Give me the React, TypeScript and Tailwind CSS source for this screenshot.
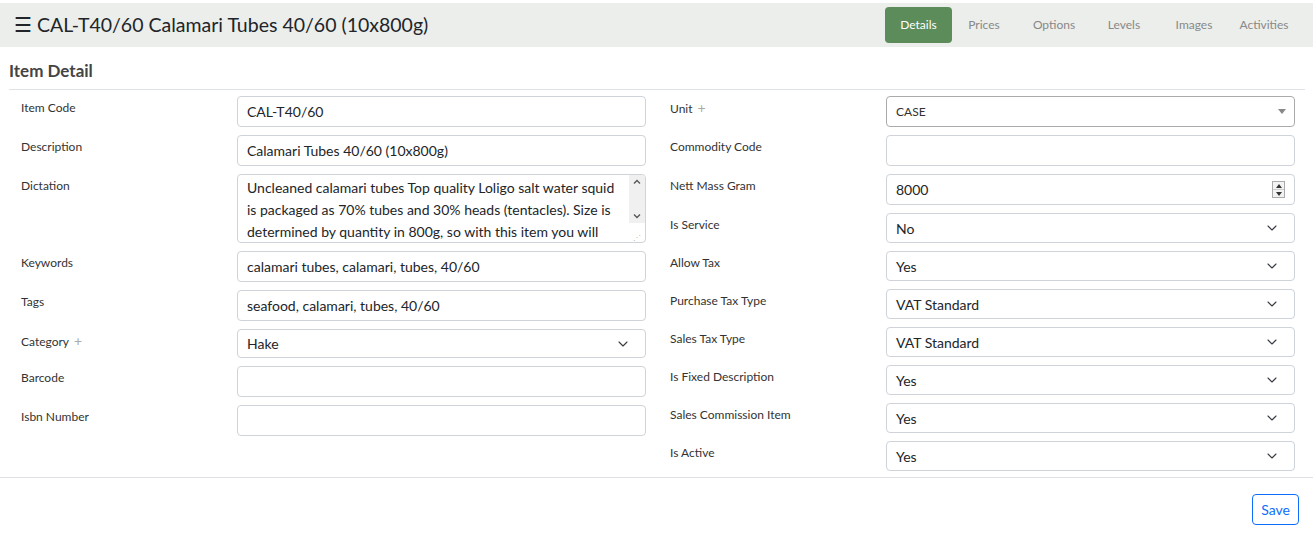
import { ChevronDown } from 'lucide-react';

const tabs = ['Details', 'Prices', 'Options', 'Levels', 'Images', 'Activities'];

function Label({ text, plus }: { text: string; plus?: boolean }) {
  return (
    <div className="w-[216px] shrink-0 pt-[3px] text-[12px] leading-[18px] text-[#333]">
      {text}
      {plus && <span className="ml-[5px] text-[14px] text-[#aaa]">+</span>}
    </div>
  );
}

function TextBox({ value }: { value?: string }) {
  return (
    <div className="flex h-[31px] w-[409px] items-center rounded-[4px] border border-[#ced4da] px-[9px] text-[14px] text-[#212529]">
      {value}
    </div>
  );
}

function SelectBox({ value, h = 'h-[30px]' }: { value: string; h?: string }) {
  return (
    <div
      className={`flex ${h} w-[409px] items-center justify-between rounded-[4px] border border-[#ced4da] pl-[9px] pr-[14px] text-[14px] text-[#212529]`}
    >
      <span>{value}</span>
      <ChevronDown size={16} strokeWidth={1.6} className="text-[#343a40]" />
    </div>
  );
}

export default function App() {
  return (
    <div className="min-h-screen bg-white pt-[3px] font-['Lato','Liberation_Sans',sans-serif] text-[#212529]">
      {/* Header */}
      <div className="flex h-[44px] items-center justify-between bg-[#eceeeb] pl-[14px] pr-[14px]">
        <h1 className="text-[19.5px] text-[#212529]">☰ CAL-T40/60 Calamari Tubes 40/60 (10x800g)</h1>
        <div className="flex">
          {tabs.map((t, i) => (
            <div
              key={t}
              className={
                i === 0
                  ? 'mr-[-3px] flex h-[36px] w-[67px] items-center justify-center rounded-[4px] bg-[#5b8c5a] text-[12px] text-white'
                  : 'flex h-[36px] w-[70px] items-center justify-center text-[12px] text-[#888]'
              }
            >
              {t}
            </div>
          ))}
        </div>
      </div>

      {/* Item detail */}
      <div className="pl-[9px] pr-[6px]">
        <h2 className="mr-[2px] border-b border-[#dee2e6] pb-[8px] pt-[14px] text-[17px] font-bold leading-[20px] text-[#444]">
          Item Detail
        </h2>
        <div className="grid grid-cols-2 pt-[6px]">
          {/* Left column */}
          <div className="flex flex-col gap-[8px] px-[12px]">
            <div className="flex">
              <Label text="Item Code" />
              <TextBox value="CAL-T40/60" />
            </div>
            <div className="flex">
              <Label text="Description" />
              <TextBox value="Calamari Tubes 40/60 (10x800g)" />
            </div>
            <div className="flex">
              <Label text="Dictation" />
              <div className="flex h-[69px] w-[409px] overflow-hidden rounded-[4px] border border-[#ced4da] text-[14px] leading-[22px] text-[#212529]">
                <div className="flex-1 pl-[9px] pr-[6px] pt-[2px]">
                  Uncleaned calamari tubes Top quality Loligo salt water squid is packaged as 70% tubes and 30% heads
                  (tentacles). Size is determined by quantity in 800g, so with this item you will
                </div>
                <div className="flex w-[16px] flex-col items-center justify-between">
                  <div className="flex h-[48px] w-full flex-col items-center justify-between bg-[#f0f0f0] py-[4px] text-[#555]">
                    <svg width="8" height="5" viewBox="0 0 8 5" fill="none" stroke="currentColor" strokeWidth="1.3">
                      <path d="M1 4.5 4 1.5 7 4.5" />
                    </svg>
                    <svg width="8" height="5" viewBox="0 0 8 5" fill="none" stroke="currentColor" strokeWidth="1.3">
                      <path d="M1 0.5 4 3.5 7 0.5" />
                    </svg>
                  </div>
                  <span className="pb-[1px] text-[8px] leading-[8px] text-[#bbb]">⋰</span>
                </div>
              </div>
            </div>
            <div className="flex">
              <Label text="Keywords" />
              <TextBox value="calamari tubes, calamari, tubes, 40/60" />
            </div>
            <div className="flex">
              <Label text="Tags" />
              <TextBox value="seafood, calamari, tubes, 40/60" />
            </div>
            <div className="flex">
              <Label text="Category" plus />
              <SelectBox value="Hake" h="h-[29px]" />
            </div>
            <div className="flex">
              <Label text="Barcode" />
              <TextBox />
            </div>
            <div className="flex">
              <Label text="Isbn Number" />
              <TextBox />
            </div>
          </div>

          {/* Right column */}
          <div className="flex flex-col gap-[8px] px-[12px]">
            <div className="flex">
              <Label text="Unit" plus />
              <div className="flex h-[31px] w-[409px] items-center justify-between rounded-[4px] border border-[#aaa] pl-[9px] pr-[8px] text-[12px] text-[#333]">
                <span>CASE</span>
                <span className="h-0 w-0 border-x-[4px] border-t-[5px] border-x-transparent border-t-[#888]" />
              </div>
            </div>
            <div className="flex">
              <Label text="Commodity Code" />
              <TextBox />
            </div>
            <div className="flex">
              <Label text="Nett Mass Gram" />
              <div className="flex h-[31px] w-[409px] items-center justify-between rounded-[4px] border border-[#ced4da] pl-[9px] pr-[9px] text-[14px] text-[#212529]">
                <span>8000</span>
                <div className="flex h-[17px] w-[13px] flex-col border border-[#aaa] bg-[#f3f3f3]">
                  <div className="flex flex-1 items-center justify-center border-b border-[#ccc]">
                    <span className="h-0 w-0 border-x-[3px] border-b-[4px] border-x-transparent border-b-[#333]" />
                  </div>
                  <div className="flex flex-1 items-center justify-center">
                    <span className="h-0 w-0 border-x-[3px] border-t-[4px] border-x-transparent border-t-[#333]" />
                  </div>
                </div>
              </div>
            </div>
            <div className="flex">
              <Label text="Is Service" />
              <SelectBox value="No" />
            </div>
            <div className="flex">
              <Label text="Allow Tax" />
              <SelectBox value="Yes" />
            </div>
            <div className="flex">
              <Label text="Purchase Tax Type" />
              <SelectBox value="VAT Standard" />
            </div>
            <div className="flex">
              <Label text="Sales Tax Type" />
              <SelectBox value="VAT Standard" />
            </div>
            <div className="flex">
              <Label text="Is Fixed Description" />
              <SelectBox value="Yes" />
            </div>
            <div className="flex">
              <Label text="Sales Commission Item" />
              <SelectBox value="Yes" />
            </div>
            <div className="flex">
              <Label text="Is Active" />
              <SelectBox value="Yes" />
            </div>
          </div>
        </div>
      </div>

      {/* Footer */}
      <div className="mt-[6px] flex justify-end border-t border-[#dee2e6] pr-[14px] pt-[16px]">
        <button className="h-[31px] rounded-[4px] border border-[#0d6efd] px-[8px] text-[14px] text-[#0d6efd]">
          Save
        </button>
      </div>
    </div>
  );
}
